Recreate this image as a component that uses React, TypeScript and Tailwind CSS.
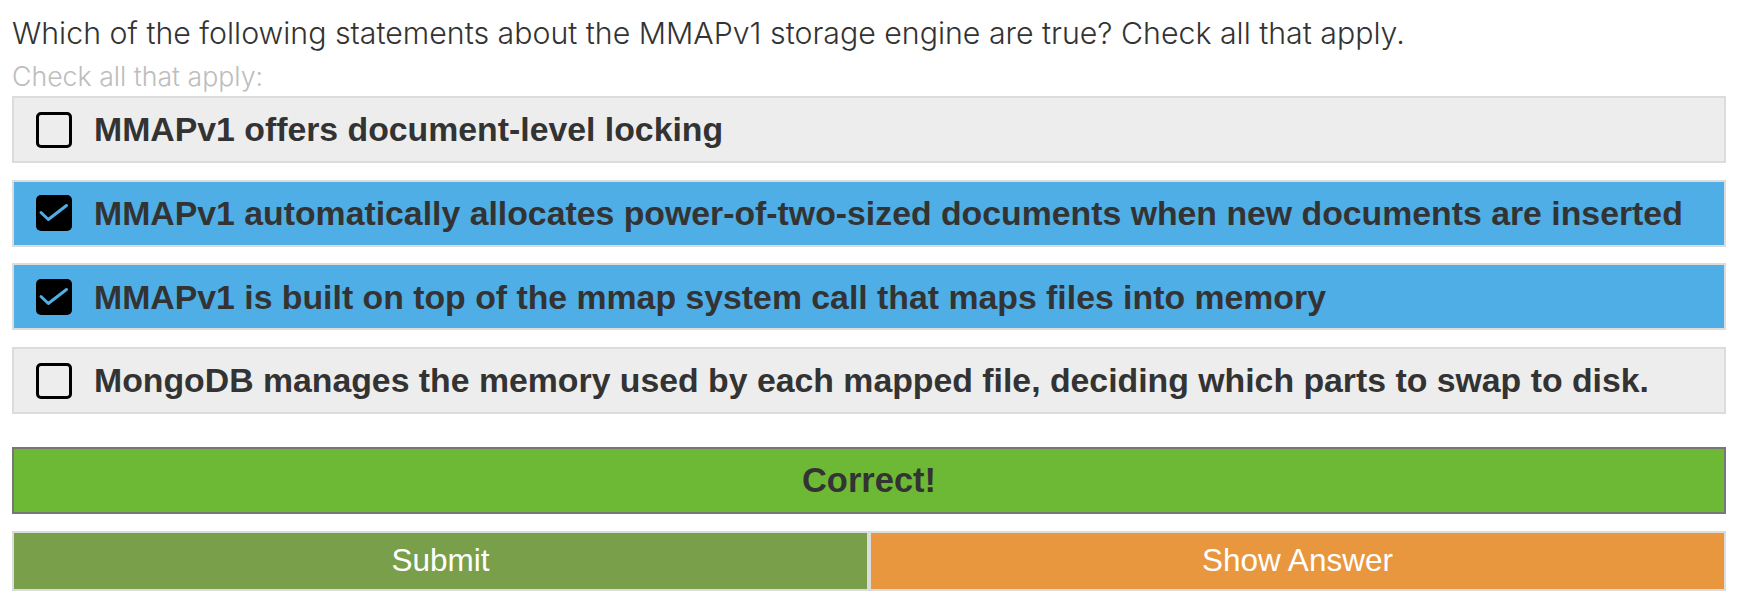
import React from "react";

const options = [
  { text: "MMAPv1 offers document-level locking", checked: false },
  { text: "MMAPv1 automatically allocates power-of-two-sized documents when new documents are inserted", checked: true },
  { text: "MMAPv1 is built on top of the mmap system call that maps files into memory", checked: true },
  { text: "MongoDB manages the memory used by each mapped file, deciding which parts to swap to disk.", checked: false },
];

function Box({ checked }: { checked: boolean }) {
  if (checked) {
    return (
      <div className="w-[36px] h-[36px] shrink-0 rounded-[5px] bg-black flex items-center justify-center">
        <svg width="36" height="36" viewBox="0 0 36 36">
          <path d="M5 17.5 L12.3 24.5 L30.5 10.5" fill="none" stroke="#4faee6" strokeWidth="3" strokeLinecap="round" strokeLinejoin="round" />
        </svg>
      </div>
    );
  }
  return <div className="w-[36px] h-[36px] shrink-0 rounded-[5px] border-[3px] border-black" />;
}

export default function App() {
  return (
    <div className="w-[1738px] h-[610px] bg-white px-[12px] pt-[13px] overflow-hidden" style={{ fontFamily: '"Liberation Sans", Arial, sans-serif' }}>
      <p className="text-[30.3px] leading-[40px] text-[#333] font-light whitespace-nowrap" style={{ fontFamily: 'Inter, "Liberation Sans", sans-serif' }}>
        Which of the following statements about the MMAPv1 storage engine are true? Check all that apply.
      </p>
      <p className="mt-[3px] text-[26.7px] leading-[40px] text-[#bdbdbd] font-light whitespace-nowrap" style={{ fontFamily: 'Inter, "Liberation Sans", sans-serif' }}>
        Check all that apply:
      </p>
      <div className="flex flex-col gap-[16.7px]">
        {options.map((o, i) => (
          <div
            key={i}
            className={`h-[67px] border-2 border-[#dcdcdc] flex items-center pl-[22px] gap-[22px] ${o.checked ? "bg-[#4faee6]" : "bg-[#ededed]"}`}
          >
            <Box checked={o.checked} />
            <span className="text-[33.8px] font-bold text-[#333] whitespace-nowrap">{o.text}</span>
          </div>
        ))}
      </div>
      <div className="mt-[33px] h-[67px] border-2 border-[#777] bg-[#6db935] flex items-center justify-center">
        <span className="text-[34.5px] font-bold text-[#333]">Correct!</span>
      </div>
      <div className="mt-[17px] h-[60px] flex">
        <div className="flex-1 border-2 border-[#dcdcdc] bg-[#799f4a] flex items-center justify-center text-white text-[31.5px]">Submit</div>
        <div className="flex-1 border-2 border-[#dcdcdc] bg-[#e8973f] flex items-center justify-center text-white text-[31.5px]">Show Answer</div>
      </div>
    </div>
  );
}
